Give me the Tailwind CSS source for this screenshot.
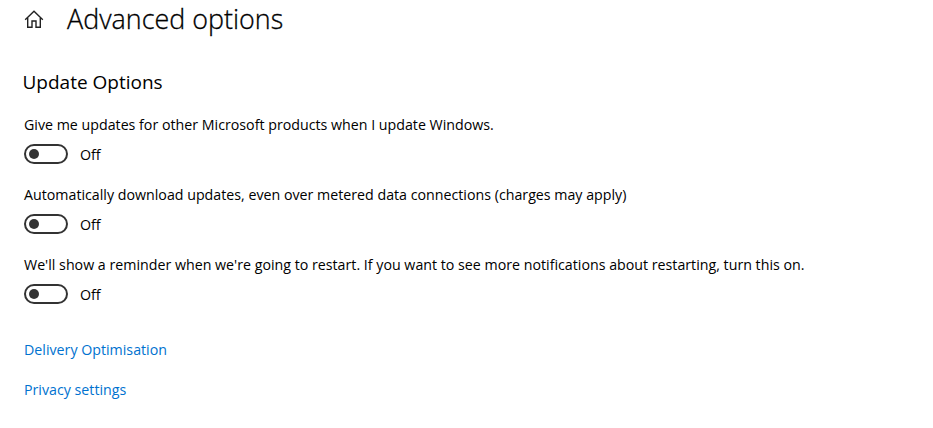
<!DOCTYPE html>
<html lang="en">
<head>
    <meta charset="UTF-8">
    <meta name="viewport" content="width=device-width, initial-scale=1.0">
    <title>Advanced options</title>
    <script src="https://cdn.jsdelivr.net/npm/@tailwindcss/browser@4"></script>
</head>
<body class="bg-white text-black font-['Open_Sans','Noto_Sans',sans-serif] overflow-hidden">

    <div class="h-screen pl-6">
        <header class="flex items-center h-[38px]">
            <svg class="w-5 h-5" viewBox="0 0 20 20" fill="none" stroke="#222" stroke-width="1.4">
                <path d="M1.2 10.8 L10 2.3 L18.8 10.8"/>
                <path d="M3.7 9 V18.3 H8 V12 H12 V18.3 H16.3 V9"/>
            </svg>
            <h1 class="ml-[23px] text-[26.9px] leading-[38px] font-light [-webkit-text-stroke:0.3px_black] whitespace-nowrap">Advanced options</h1>
        </header>

        <h2 class="mt-[30px] text-[19px] leading-7 whitespace-nowrap -ml-[1.5px]">Update Options</h2>

        <section class="mt-[19px] h-[70px]">
            <p class="text-[14.22px] leading-5 whitespace-nowrap">Give me updates for other Microsoft products when I update Windows.</p>
            <button class="mt-[9px] flex items-center h-5">
                <span class="flex items-center w-11 h-5 pl-[3px] border-2 border-[#333] rounded-full"><span class="size-2.5 rounded-full bg-[#333]"></span></span>
                <span class="ml-3 pt-0.5 text-[14.22px]">Off</span>
            </button>
        </section>
        <section class="h-[70px]">
            <p class="text-[14.22px] leading-5 whitespace-nowrap">Automatically download updates, even over metered data connections (charges may apply)</p>
            <button class="mt-[9px] flex items-center h-5">
                <span class="flex items-center w-11 h-5 pl-[3px] border-2 border-[#333] rounded-full"><span class="size-2.5 rounded-full bg-[#333]"></span></span>
                <span class="ml-3 pt-0.5 text-[14.22px]">Off</span>
            </button>
        </section>
        <section class="h-[70px]">
            <p class="text-[14.22px] leading-5 whitespace-nowrap">We'll show a reminder when we're going to restart. If you want to see more notifications about restarting, turn this on.</p>
            <button class="mt-[9px] flex items-center h-5">
                <span class="flex items-center w-11 h-5 pl-[3px] border-2 border-[#333] rounded-full"><span class="size-2.5 rounded-full bg-[#333]"></span></span>
                <span class="ml-3 pt-0.5 text-[14.22px]">Off</span>
            </button>
        </section>

        <nav class="mt-[15px] flex flex-col items-start gap-5 text-[14.22px] leading-5 text-[#0072cf]">
            <a href="#">Delivery Optimisation</a>
            <a href="#">Privacy settings</a>
        </nav>
    </div>

</body>
</html>
